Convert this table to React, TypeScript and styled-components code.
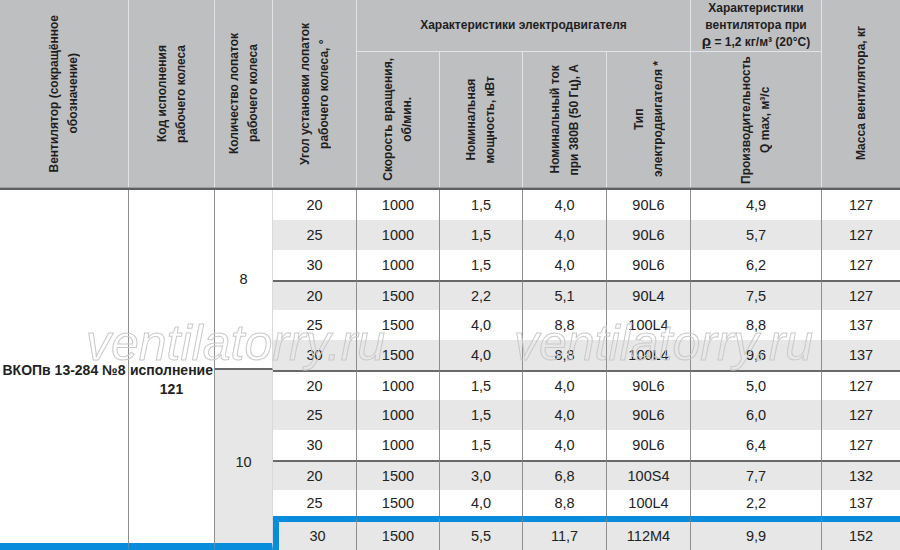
import React from 'react';
import styled, { createGlobalStyle } from 'styled-components';

const GlobalStyle = createGlobalStyle`
  html, body {
    margin: 0;
    padding: 0;
    background: #ffffff;
    overflow: hidden;
  }
`;

// Main table grid: 10 columns, two header rows, a dark rule, twelve body rows
const Table = styled.div`
  position: relative;
  width: 900px;
  height: 550px;
  display: grid;
  grid-template-columns: 129px 86px 58px 84px 83px 83px 84px 84px 131px 78px;
  grid-template-rows: 52px 135px 3px repeat(10, 30px) 26px 34px;
  font-family: "Liberation Sans", Arial, sans-serif;
  color: #1e1e1e;
  overflow: hidden;
`;

// Header cell (grey), spans set through props
const HeadCell = styled.div<{ $rows?: number; $cols?: number; $under?: boolean; $last?: boolean }>`
  grid-row: span ${p => p.$rows ?? 1};
  grid-column: span ${p => p.$cols ?? 1};
  display: flex;
  align-items: center;
  justify-content: center;
  background: #bebfc1;
  border-right: ${p => (p.$last ? 'none' : '1px solid #e2e3e4')};
  border-bottom: ${p => (p.$under ? '1px solid #e2e3e4' : 'none')};
  box-sizing: border-box;
  font-size: 12px;
  font-weight: 700;
  text-align: center;
  line-height: 16.5px;
`;

// Rotated header caption, reads bottom to top
const Vertical = styled.span`
  writing-mode: vertical-rl;
  transform: rotate(180deg);
  line-height: 19px;
  white-space: nowrap;
  text-align: center;
`;

const Rho = styled.span`
  font-size: 15px;
  text-decoration: underline;
`;

// Dark rule below the header
const HeadRule = styled.div`
  grid-column: 1 / -1;
  background: linear-gradient(#9d9e9f 0 1px, #5e5f61 1px);
`;

type CellProps = {
  $rows?: number;
  $shade?: boolean;
  $group?: boolean;
  $blueTop?: boolean;
  $blueLeft?: boolean;
  $blueBottom?: boolean;
  $soft?: boolean;
  $edge?: boolean;
  $bold?: boolean;
  $push?: number;
  $groupBottom?: boolean;
};

// Body cell with alternating shade, group rule and the blue highlight
const Cell = styled.div<CellProps>`
  grid-row: span ${p => p.$rows ?? 1};
  display: flex;
  flex-direction: column;
  align-items: center;
  justify-content: center;
  box-sizing: border-box;
  background: ${p => (p.$shade ? '#e6e7e6' : '#ffffff')};
  border-right: ${p => (p.$edge ? 'none' : p.$soft ? '1px solid #d9d9d9' : '1px solid #8f8f8f')};
  border-top: ${p => (p.$blueTop ? '6px solid #0a8cdc' : p.$group ? '2px solid #68696b' : 'none')};
  border-left: ${p => (p.$blueLeft ? '6px solid #0a8cdc' : 'none')};
  border-bottom: ${p => (p.$blueBottom ? '7px solid #0a8cdc' : p.$groupBottom ? '2px solid #68696b' : 'none')};
  padding-top: ${p => p.$push ?? 0}px;
  font-size: ${p => (p.$bold ? 14 : 14.5)}px;
  font-weight: ${p => (p.$bold ? 700 : 400)};
  line-height: 19px;
  color: #222222;
  white-space: nowrap;
`;

// Watermark text lying over the table
const Watermark = styled.span<{ $left: number }>`
  position: absolute;
  top: 318px;
  left: ${p => p.$left}px;
  font-family: "Liberation Sans", Arial, sans-serif;
  font-style: italic;
  font-size: 50px;
  line-height: 50px;
  color: transparent;
  -webkit-text-stroke: 1px #c9c9c9;
  pointer-events: none;
  white-space: nowrap;
`;

const rows = [
  ['20', '1000', '1,5', '4,0', '90L6', '4,9', '127'],
  ['25', '1000', '1,5', '4,0', '90L6', '5,7', '127'],
  ['30', '1000', '1,5', '4,0', '90L6', '6,2', '127'],
  ['20', '1500', '2,2', '5,1', '90L4', '7,5', '127'],
  ['25', '1500', '4,0', '8,8', '100L4', '8,8', '137'],
  ['30', '1500', '4,0', '8,8', '100L4', '9,6', '137'],
  ['20', '1000', '1,5', '4,0', '90L6', '5,0', '127'],
  ['25', '1000', '1,5', '4,0', '90L6', '6,0', '127'],
  ['30', '1000', '1,5', '4,0', '90L6', '6,4', '127'],
  ['20', '1500', '3,0', '6,8', '100S4', '7,7', '132'],
  ['25', '1500', '4,0', '8,8', '100L4', '2,2', '137'],
  ['30', '1500', '5,5', '11,7', '112M4', '9,9', '152'],
];

function DataRow({ values, index }: { values: string[]; index: number }) {
  const shade = index % 2 === 1;
  const group = index === 3 || index === 6 || index === 9;
  const last = index === rows.length - 1;
  return (
    <>
      {values.map((v, i) => (
        <Cell
          key={i}
          $shade={shade}
          $group={group}
          $blueTop={last}
          $blueLeft={last && i === 0}
          $edge={i === values.length - 1}
        >
          {v}
        </Cell>
      ))}
    </>
  );
}

export default function App() {
  return (
    <>
      <GlobalStyle />
      <Table>
        {/* Header, first row */}
        <HeadCell $rows={2}>
          <Vertical>Вентилятор (сокращённое<br />обозначение)</Vertical>
        </HeadCell>
        <HeadCell $rows={2}>
          <Vertical>Код исполнения<br />рабочего колеса</Vertical>
        </HeadCell>
        <HeadCell $rows={2}>
          <Vertical>Количество лопаток<br />рабочего колеса</Vertical>
        </HeadCell>
        <HeadCell $rows={2}>
          <Vertical>Угол установки лопаток<br />рабочего колеса, °</Vertical>
        </HeadCell>
        <HeadCell $cols={4} $under>Характеристики электродвигателя</HeadCell>
        <HeadCell $under>
          <span>
            Характеристики<br />вентилятора при<br /><Rho>ρ</Rho> = 1,2 кг/м³ (20°C)
          </span>
        </HeadCell>
        <HeadCell $rows={2} $last>
          <Vertical>Масса вентилятора, кг</Vertical>
        </HeadCell>

        {/* Header, second row */}
        <HeadCell>
          <Vertical>Скорость вращения,<br />об/мин.</Vertical>
        </HeadCell>
        <HeadCell>
          <Vertical>Номинальная<br />мощность, кВт</Vertical>
        </HeadCell>
        <HeadCell>
          <Vertical>Номинальный ток<br />при 380В (50 Гц), А</Vertical>
        </HeadCell>
        <HeadCell>
          <Vertical>Тип<br />электродвигателя *</Vertical>
        </HeadCell>
        <HeadCell>
          <Vertical>Производительность<br />Q max, м³/с</Vertical>
        </HeadCell>

        <HeadRule />

        {/* Body */}
        <Cell $rows={12} $bold $blueBottom $push={7}>ВКОПв 13-284 №8</Cell>
        <Cell $rows={12} $bold $blueBottom $push={26}>
          <span>исполнение</span>
          <span>121</span>
        </Cell>
        <Cell $rows={6} $soft $groupBottom>8</Cell>
        {rows.slice(0, 6).map((r, i) => (
          <DataRow key={i} values={r} index={i} />
        ))}
        <Cell $rows={6} $soft $shade $blueBottom $push={11}>10</Cell>
        {rows.slice(6).map((r, i) => (
          <DataRow key={i + 6} values={r} index={i + 6} />
        ))}

        <Watermark $left={86}>ventilatorry.ru</Watermark>
        <Watermark $left={514}>ventilatorry.ru</Watermark>
      </Table>
    </>
  );
}
